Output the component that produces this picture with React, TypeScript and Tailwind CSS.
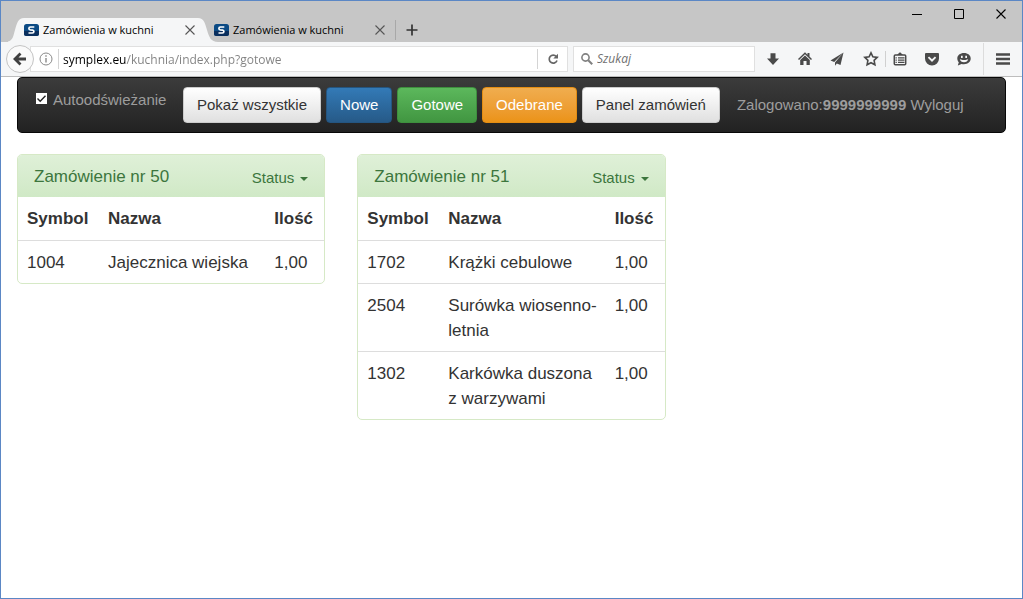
import React, { useState } from 'react';
import { clsx } from 'clsx';

interface OrderItem {
  symbol: string;
  name: string;
  quantity: string;
}

interface Order {
  id: number;
  items: OrderItem[];
}

const ORDERS: Order[] = [
  {
    id: 50,
    items: [{ symbol: '1004', name: 'Jajecznica wiejska', quantity: '1,00' }],
  },
  {
    id: 51,
    items: [
      { symbol: '1702', name: 'Krążki cebulowe', quantity: '1,00' },
      { symbol: '2504', name: 'Surówka wiosenno-letnia', quantity: '1,00' },
      // non-breaking space keeps the preposition with its noun
      { symbol: '1302', name: 'Karkówka duszona z\u00a0warzywami', quantity: '1,00' },
    ],
  },
];

const FILTERS = [
  { label: 'Pokaż wszystkie', tone: 'border-[#ccc] from-white to-[#e0e0e0] text-[#333]' },
  { label: 'Nowe', tone: 'border-[#245580] from-[#337ab7] to-[#265a88] text-white' },
  { label: 'Gotowe', tone: 'border-[#3e8f3e] from-[#5cb85c] to-[#419641] text-white' },
  { label: 'Odebrane', tone: 'border-[#e38d13] from-[#f0ad4e] to-[#eb9316] text-white' },
  { label: 'Panel zamówień', tone: 'border-[#ccc] from-white to-[#e0e0e0] text-[#333]' },
];

function Favicon() {
  return (
    <svg viewBox="0 0 15 12" className="h-3 w-[15px] shrink-0" aria-hidden="true">
      <rect width="15" height="12" rx="2.5" fill="#0b4a84" />
      <path d="M0 7h15v2.5a2.5 2.5 0 0 1-2.5 2.5h-10A2.5 2.5 0 0 1 0 9.5z" fill="#0a2f5e" />
      <path
        d="M10.300 3H6.500c-1 0-1.600.6-1.600 1.400s.6 1.400 1.400 1.500l2.200.2c.8.1 1.400.6 1.400 1.400S9.300 9 8.300 9H4.500"
        fill="none"
        stroke="#fff"
        strokeWidth="1.7"
      />
    </svg>
  );
}

function CloseIcon() {
  return (
    <svg viewBox="0 0 10 10" className="size-2.5" fill="none" stroke="currentColor" aria-hidden="true">
      <path d="M.5.5l9 9M9.5.5l-9 9" strokeWidth="1.1" />
    </svg>
  );
}

function BrowserTab({ active }: { active?: boolean }) {
  return (
    <div className="flex h-6 w-[190px] items-stretch">
      <svg viewBox="0 0 16 24" className="h-6 w-4 shrink-0" aria-hidden="true">
        {active && <path d="M-4 24C5 24 5 19 7 12S10 0 16 0v24z" fill="#f5f6f7" />}
      </svg>
      <div className={clsx('flex flex-1 items-center pr-[3px]', active && 'bg-[#f5f6f7]')}>
        <Favicon />
        <span className="ml-1 flex-1 whitespace-nowrap text-[11px] text-black">Zamówienia w kuchni</span>
        <button type="button" aria-label="Zamknij kartę" className="text-[#555]">
          <CloseIcon />
        </button>
      </div>
      <svg viewBox="0 0 20 24" className="-mr-5 h-6 w-5 shrink-0" aria-hidden="true">
        {active && <path d="M0 0c6 0 7 5 9 12s4 12 11 12H0z" fill="#f5f6f7" />}
      </svg>
    </div>
  );
}

function TitleBar() {
  return (
    <header className="flex h-[41px] items-end bg-[#c6c6c6] pl-[7px]">
      <BrowserTab active />
      <BrowserTab />
      <div className="mb-0.5 ml-[7px] flex h-5 items-center border-l border-[#a8a8a8] pl-2.5">
        <button type="button" aria-label="Nowa karta" className="text-[#333]">
          <svg viewBox="0 0 12 12" className="size-3" fill="none" stroke="currentColor" aria-hidden="true">
            <path d="M6 .5v11M.5 6h11" strokeWidth="1.7" />
          </svg>
        </button>
      </div>
      <div className="mr-4 ml-auto flex items-center gap-8 self-start pt-2 text-black">
        <button type="button" aria-label="Minimalizuj">
          <svg viewBox="0 0 10 10" className="size-2.5" stroke="currentColor" aria-hidden="true">
            <path d="M0 5.500h10" />
          </svg>
        </button>
        <button type="button" aria-label="Maksymalizuj">
          <svg viewBox="0 0 10 10" className="size-2.5" fill="none" stroke="currentColor" aria-hidden="true">
            <path d="M.5.5h9v9h-9z" />
          </svg>
        </button>
        <button type="button" aria-label="Zamknij">
          <CloseIcon />
        </button>
      </div>
    </header>
  );
}

function ToolButton({ label, children }: { label: string; children: React.ReactNode }) {
  return (
    <button type="button" aria-label={label} className="flex w-8 justify-center text-[#4a4a4a]">
      <svg viewBox="0 0 16 16" className="size-4" fill="currentColor" aria-hidden="true">
        {children}
      </svg>
    </button>
  );
}

function NavigationBar() {
  const [url, setUrl] = useState('symplex.eu/kuchnia/index.php?gotowe');

  return (
    <div className="flex h-[35px] items-center border-b border-[#bdbdbd] bg-[#f5f6f7] pl-[5px]">
      <button
        type="button"
        aria-label="Wstecz"
        className="z-10 -mr-1 flex size-7 shrink-0 items-center justify-center rounded-full border border-[#c4c4c4] bg-[#fafafa]"
      >
        <svg viewBox="0 0 14 14" className="size-3.5" fill="none" stroke="#404040" aria-hidden="true">
          <path d="M7.500 1.500L2 7l5.500 5.500M2.500 7H13" strokeWidth="2.8" />
        </svg>
      </button>
      <div className="flex h-[26px] flex-1 items-center border border-[#e0e0e0] bg-white pl-2">
        <svg viewBox="0 0 14 14" className="size-3.5 shrink-0" fill="none" stroke="#8a8a8a" aria-hidden="true">
          <circle cx="7" cy="7" r="6" />
          <path d="M7 6v4.500M7 3.300v1.500" strokeWidth="1.4" />
        </svg>
        <input
          type="text"
          aria-label="Adres"
          value={url}
          onChange={e => setUrl(e.target.value)}
          className="ml-[5px] h-5 min-w-0 flex-1 border-l border-[#d4d4d4] bg-linear-to-r from-black from-[67px] to-[#808080] to-[67px] bg-clip-text pl-1 text-xs text-transparent outline-none"
        />
        <button
          type="button"
          aria-label="Odśwież"
          className="flex h-5 w-[30px] items-center justify-center border-l border-[#d4d4d4] text-[#666]"
        >
          <svg viewBox="0 0 12 12" className="size-3" fill="none" stroke="currentColor" aria-hidden="true">
            <path d="M9.300 3.500A4 4 0 1 0 10 7.500" strokeWidth="1.7" />
            <path d="M11 .8v4.700H6.300z" fill="currentColor" stroke="none" />
          </svg>
        </button>
      </div>
      <div className="ml-[5px] flex h-[26px] w-[182px] items-center border border-[#e0e0e0] bg-white pl-[7px]">
        <svg viewBox="0 0 12 12" className="size-3 shrink-0" fill="none" stroke="#808080" aria-hidden="true">
          <circle cx="4.500" cy="4.500" r="3.600" strokeWidth="1.6" />
          <path d="M7.200 7.200l4 4" strokeWidth="2" />
        </svg>
        <input
          type="text"
          aria-label="Szukaj"
          placeholder="Szukaj"
          className="ml-1 w-full min-w-0 text-xs italic outline-none placeholder:text-[#707070]"
        />
      </div>
      <div className="ml-0.5 flex items-center">
        <ToolButton label="Pobrane">
          <path d="M5.500 2.200h5v5.300H14L8 14 2 7.500h3.500z" />
        </ToolButton>
        <ToolButton label="Strona startowa">
          <path d="M8 1.300l2.500 2.400V2h2v3.600L15 8l-1 1-6-5.700L2 9 1 8z" />
          <path d="M3.200 9L8 4.500 12.800 9v5H9.500v-4h-3v4H3.200z" />
        </ToolButton>
        <ToolButton label="Udostępnij">
          <path d="M14.500 1.500L1.500 9.500l3.700 1.400zM14.500 1.500L6 11.500v3.200l1.800-2.200 3.700 1.500z" />
        </ToolButton>
        <div className="ml-0.5 flex items-center">
          <ToolButton label="Zakładka">
            <path
              d="M8 1.800l1.900 4 4.300.6-3.100 3 .8 4.400L8 11.700l-3.900 2.100.8-4.400-3.100-3 4.300-.6z"
              fill="none"
              stroke="currentColor"
              strokeWidth="1.6"
            />
          </ToolButton>
          <div className="-mx-0.5 h-4 w-px bg-[#d0d0d0]" />
        </div>
        <ToolButton label="Lista zakładek">
          <rect x="2.300" y="4" width="11.400" height="9.800" rx="1" fill="none" stroke="currentColor" strokeWidth="1.5" />
          <path d="M5 4L7.500 1.500h1L11 4zM3.500 6.200h1.300v1.200H3.500zM6 6.200h6.500v1.200H6zM3.500 8.500h1.300v1.200H3.500zM6 8.500h6.500v1.200H6zM3.500 10.800h1.300V12H3.500zM6 10.800h6.500V12H6z" />
        </ToolButton>
        <ToolButton label="Pocket">
          <path
            fillRule="evenodd"
            d="M2 2h12a1 1 0 0 1 1 1v4.500a7 7 0 0 1-14 0V3a1 1 0 0 1 1-1zM3.800 6.700L8 11l4.200-4.300-1.300-1.300L8 8.200 5.100 5.400z"
          />
        </ToolButton>
        <ToolButton label="Czat">
          <path
            fillRule="evenodd"
            d="M8 2c4 0 6.700 2.400 6.700 5.600S12 13.200 8 13.200c-.9 0-1.700-.1-2.400-.3L1.800 14.500l1-3.200C1.800 10.300 1.300 9 1.300 7.600 1.300 4.400 4 2 8 2zM5 4.700v2.200h1.700V4.700zM9.300 4.700v2.200H11V4.700zM3.800 8.200c.5 2 2 3 4.200 3s3.700-1 4.200-3l-1.200.2C9 9.200 7 9.200 5 8.400z"
          />
        </ToolButton>
        <div className="ml-[3px] flex h-8 w-[39px] items-center justify-center border-l border-[#dcdcdc]">
          <button type="button" aria-label="Menu" className="text-[#4a4a4a]">
            <svg viewBox="0 0 14 12" className="h-3 w-3.5" stroke="currentColor" aria-hidden="true">
              <path d="M0 1.500h14M0 6h14M0 10.500h14" strokeWidth="2.4" />
            </svg>
          </button>
        </div>
      </div>
    </div>
  );
}

function KitchenNavbar() {
  const [autoRefresh, setAutoRefresh] = useState(true);

  return (
    <nav className="flex h-14 items-start rounded-[5px] border border-[#080808] bg-linear-to-b from-[#3c3c3c] to-[#222] pt-[9px] pl-[18px] text-[15px] text-[#9d9d9d]">
      <label className="flex h-[26px] w-[147px] items-center">
        <span className="relative mb-1 flex">
          <input
            type="checkbox"
            checked={autoRefresh}
            onChange={e => setAutoRefresh(e.target.checked)}
            className="size-[11px] appearance-none bg-white"
          />
          {autoRefresh && (
            <svg
              viewBox="0 0 11 11"
              className="pointer-events-none absolute inset-0 size-[11px]"
              fill="none"
              stroke="#222"
              aria-hidden="true"
            >
              <path d="M1.500 5.500l2.700 2.700 5.300-5.400" strokeWidth="1.4" />
            </svg>
          )}
        </span>
        <span className="ml-1.5">Autoodświeżanie</span>
      </label>
      <div className="flex gap-[5px]">
        {FILTERS.map(filter => (
          <button
            key={filter.label}
            type="button"
            className={clsx(
              'h-9 rounded-[4px] border bg-linear-to-b px-[13px] whitespace-nowrap',
              filter.tone
            )}
          >
            {filter.label}
          </button>
        ))}
      </div>
      <p className="ml-[17px] leading-9 whitespace-nowrap">
        Zalogowano:<strong>9999999999</strong> <a href="#wyloguj">Wyloguj</a>
      </p>
    </nav>
  );
}

function OrderPanel({ order }: { order: Order }) {
  return (
    <section className="overflow-hidden rounded-[5px] border border-[#d6e9c6] bg-white">
      <div className="flex h-[42px] items-center justify-between bg-linear-to-b from-[#dff0d8] to-[#d0e9c6] px-4 pt-0.5 text-[#3c763d]">
        <h3 className="text-[17px]">Zamówienie nr {order.id}</h3>
        <button type="button" className="flex items-center gap-1.5 pt-0.5 text-[15px]">
          Status
          <svg viewBox="0 0 8 4" className="mt-0.5 h-1 w-2" fill="currentColor" aria-hidden="true">
            <path d="M0 0h8L4 4z" />
          </svg>
        </button>
      </div>
      <table className="w-full table-fixed text-left text-[17px] leading-[25px] text-[#333]">
        <thead>
          <tr>
            <th className="w-[81px] px-[9px] py-[9px]">Symbol</th>
            <th className="py-[9px] pl-[9px]">Nazwa</th>
            <th className="w-[59px] py-[9px] pl-[9px]">Ilość</th>
          </tr>
        </thead>
        <tbody>
          {order.items.map(item => (
            <tr key={item.symbol} className="border-t border-[#ddd] align-top">
              <td className="px-[9px] pt-[9px] pb-2">{item.symbol}</td>
              <td className="pt-[9px] pb-2 pl-[9px]">{item.name}</td>
              <td className="pt-[9px] pb-2 pl-[9px]">{item.quantity}</td>
            </tr>
          ))}
        </tbody>
      </table>
    </section>
  );
}

export default function App() {
  return (
    <div className="min-h-screen border border-[#5b87c5] bg-white font-['Open_Sans','Noto_Sans',sans-serif]">
      <TitleBar />
      <NavigationBar />
      <main className="px-4 font-['Liberation_Sans',Arial,sans-serif]">
        <KitchenNavbar />
        <div className="mt-[21px] grid grid-cols-3 items-start gap-8">
          {ORDERS.map(order => (
            <OrderPanel key={order.id} order={order} />
          ))}
        </div>
      </main>
    </div>
  );
}
